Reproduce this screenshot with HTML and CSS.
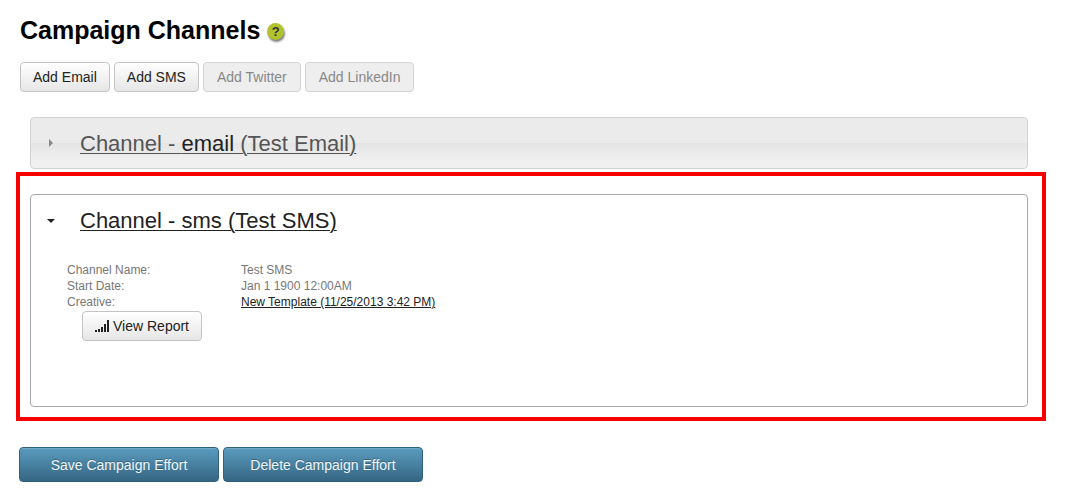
FILE: index.html
```
<!DOCTYPE html>
<html lang="en">
<head>
    <meta charset="UTF-8">
    <meta name="viewport" content="width=device-width, initial-scale=1">
    <title>Campaign Channels</title>
    <link rel="stylesheet" href="styles.css">
</head>
<body>
    <header class="page-header">
        <h1>Campaign Channels</h1>
        <a class="help" href="#">?</a>
    </header>

    <div class="toolbar">
        <button type="button" class="btn">Add Email</button>
        <button type="button" class="btn">Add SMS</button>
        <button type="button" class="btn" disabled>Add Twitter</button>
        <button type="button" class="btn" disabled>Add LinkedIn</button>
    </div>

    <section class="channel channel-closed">
        <h2 class="channel-header">
            <svg class="arrow" viewBox="0 0 8 8"><path d="M2 0 L6 4 L2 8 Z"/></svg>
            <a href="#">Channel - <span class="type">email</span> (Test Email)</a>
        </h2>
    </section>

    <div class="highlight">
        <section class="channel channel-open">
            <h2 class="channel-header">
                <svg class="arrow" viewBox="0 0 8 8"><path d="M0 3 L8 3 L4 7 Z"/></svg>
                <a href="#">Channel - sms (Test SMS)</a>
            </h2>
            <div class="channel-body">
                <dl class="details">
                    <dt>Channel Name:</dt>
                    <dd>Test SMS</dd>
                    <dt>Start Date:</dt>
                    <dd>Jan 1 1900 12:00AM</dd>
                    <dt>Creative:</dt>
                    <dd><a href="#">New Template (11/25/2013 3:42 PM)</a></dd>
                </dl>
                <button type="button" class="btn btn-report">
                    <svg class="bars" viewBox="0 0 14 12">
                        <path d="M0 10h2v2H0z M3 9h2v3H3z M6 7h2v5H6z M9 4h2v8H9z M12 0h2v12h-2z"/>
                    </svg>
                    View Report
                </button>
            </div>
        </section>
    </div>

    <div class="actions">
        <button type="button" class="btn-primary">Save Campaign Effort</button>
        <button type="button" class="btn-primary">Delete Campaign Effort</button>
    </div>
</body>
</html>
```
FILE: styles.css
```
* {
    box-sizing: border-box;
}
body {
    margin: 0;
    padding: 15px 44px 0 16px;
    font-family: "Liberation Sans", Arial, sans-serif;
    font-size: 14px;
    color: #222;
    background-color: #fff;
}
h1, h2, dl, dd {
    margin: 0;
}
.page-header {
    display: flex;
    align-items: center;
    gap: 7px;
    padding-left: 4px;
}
.page-header h1 {
    font-size: 25px;
    line-height: 30px;
    color: #000;
}
.help {
    width: 17px;
    height: 17px;
    margin-top: 3px;
    border-radius: 50%;
    background-color: #b0c22e;
    box-shadow: 1px 2px 2px rgba(0, 0, 0, 0.5);
    color: #333;
    font-size: 13px;
    font-weight: bold;
    line-height: 17px;
    text-align: center;
    text-decoration: none;
}

/* buttons */
.toolbar {
    display: flex;
    gap: 4px;
    margin: 17px 0 25px;
    padding-left: 4px;
}
.btn {
    height: 30px;
    padding: 0 12px;
    border: 1px solid #c4c4c4;
    border-radius: 4px;
    background: linear-gradient(#fff, #e6e6e6);
    color: #222;
    font: inherit;
    white-space: nowrap;
}
.btn:disabled {
    padding: 0 13px;
    border-color: #d3d3d3;
    background: #eee;
    color: #888;
}
.btn-report {
    display: flex;
    align-items: center;
    gap: 4px;
    margin: 1px 0 0 15px;
}
.bars {
    width: 14px;
    height: 12px;
    fill: #222;
}
.actions {
    display: flex;
    gap: 4px;
    margin-top: 26px;
    padding-left: 3px;
}
.btn-primary {
    width: 200px;
    height: 35px;
    padding: 0;
    border: 1px solid #2f617d;
    border-radius: 4px;
    background: linear-gradient(#5a9bbf, #356682);
    box-shadow: inset 0 1px 0 rgba(255, 255, 255, 0.15);
    color: #f0f6fa;
    font: inherit;
    text-shadow: 0 -1px 0 rgba(0, 0, 0, 0.25);
}

/* channels */
.channel {
    border: 1px solid #d3d3d3;
    border-radius: 4px;
}
.channel-header {
    display: flex;
    align-items: center;
    height: 50px;
    padding-left: 16px;
    font-size: 22px;
    font-weight: normal;
}
.channel-header a {
    padding-top: 2px;
    color: inherit;
    text-decoration-thickness: 1px;
    text-underline-offset: 2px;
}
.arrow {
    width: 8px;
    height: 8px;
    margin-right: 25px;
    fill: currentColor;
}
.channel-closed {
    margin: 0 18px 3px 14px;
    background: linear-gradient(#ebebeb 50%, #e4e4e4 50%, #f0f0f0 85%);
    color: #555;
}
.channel-closed .arrow {
    fill: #888;
}
.type {
    color: #212121;
}
.highlight {
    padding: 18px 14px 10px 10px;
    border: 4px solid #f70000;
}
.channel-open {
    border-color: #aaa;
}
.channel-body {
    padding: 17px 36px 65px;
}
.details {
    display: grid;
    grid-template-columns: 174px 1fr;
    font-size: 12px;
    line-height: 16px;
    color: #777;
}
.details a {
    color: #222;
}
```
